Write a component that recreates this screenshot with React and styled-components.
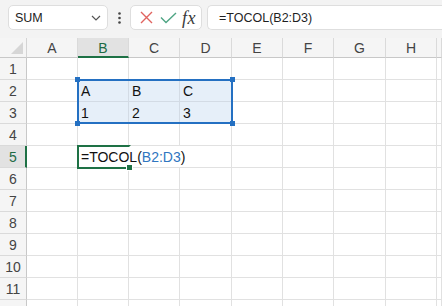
import React from "react";
import styled, { createGlobalStyle } from "styled-components";

const GlobalStyle = createGlobalStyle`
  html, body { margin: 0; padding: 0; background: #ffffff; }
  body { font-family: "Liberation Sans", Arial, sans-serif; overflow: hidden; }
  #root { width: 442px; height: 306px; overflow: hidden; }
`;

const Toolbar = styled.div`
  height: 38px;
  background: #f3f3f3;
  display: flex;
  align-items: flex-start;
  padding: 5px 0 0 8px;
  box-sizing: border-box;
  gap: 0;
`;

const Box = styled.div`
  height: 25px;
  box-sizing: border-box;
  background: #ffffff;
  border: 1px solid #dedede;
  border-radius: 5px;
  display: flex;
  align-items: center;
`;

const NameBox = styled(Box)`
  width: 100px;
  padding: 0 6px 0 6px;
  justify-content: space-between;
  font-family: "Liberation Sans", Arial, sans-serif;
  font-size: 12.5px;
  color: #222222;
`;

const Dots = styled.div`
  width: 22px;
  height: 25px;
  display: flex;
  align-items: center;
  justify-content: center;
`;

const FxGroup = styled(Box)`
  width: 72px;
  padding: 0 0 0 4px;
  gap: 0;
`;

const IconSlot = styled.div`
  width: ${(p) => p.$w}px;
  height: 23px;
  display: flex;
  align-items: center;
  justify-content: center;
`;

const FxText = styled.span`
  font-family: "Liberation Serif", "Times New Roman", serif;
  font-style: italic;
  font-size: 18px;
  color: #3a3a3a;
  line-height: 1;
  letter-spacing: 0.5px;
`;

const FormulaBox = styled(Box)`
  margin-left: 5px;
  flex: 1;
  border-right: none;
  border-top-right-radius: 0;
  border-bottom-right-radius: 0;
  padding-left: 11px;
  font-family: "Liberation Sans", Arial, sans-serif;
  font-size: 12.5px;
  color: #1f1f1f;
`;

const Sheet = styled.div`
  position: relative;
  display: grid;
  grid-template-columns: 27px 51px 51px 51px 52px 51px 51px 52px 51px 1fr;
  grid-template-rows: 20px;
  grid-auto-rows: 22px;
  font-family: "Liberation Sans", Arial, sans-serif;
`;

const Corner = styled.div`
  background: #f5f5f5;
  box-sizing: border-box;
  border-right: 1px solid #d4d4d4;
  border-bottom: 1px solid #c8c8c8;
  display: flex;
  align-items: flex-end;
  justify-content: flex-end;
  padding: 0 3px 3px 0;
`;

const ColHeader = styled.div`
  background: ${(p) => (p.$active ? "#e2e2e2" : "#f5f5f5")};
  box-sizing: border-box;
  border-right: 1px solid #dadada;
  border-bottom: ${(p) => (p.$active ? "2px solid #1e7145" : "1px solid #c8c8c8")};
  display: flex;
  align-items: center;
  justify-content: center;
  font-size: 14px;
  color: ${(p) => (p.$active ? "#1e6b44" : "#444444")};
  padding-top: ${(p) => (p.$active ? "1px" : "0")};
`;

const RowHeader = styled.div`
  background: ${(p) => (p.$active ? "#e2e2e2" : "#f5f5f5")};
  box-sizing: border-box;
  border-right: ${(p) => (p.$active ? "2px solid #1e7145" : "1px solid #c8c8c8")};
  border-bottom: 1px solid #dadada;
  display: flex;
  align-items: center;
  justify-content: center;
  font-size: 14px;
  color: ${(p) => (p.$active ? "#1e6b44" : "#444444")};
  padding-left: ${(p) => (p.$active ? "1px" : "0")};
`;

const Cell = styled.div`
  background: ${(p) => (p.$sel ? "#e6eff9" : "#ffffff")};
  box-sizing: border-box;
  border-right: 1px solid ${(p) => (p.$sel ? "#d3dbe5" : "#e1e1e1")};
  border-bottom: 1px solid ${(p) => (p.$sel ? "#d3dbe5" : "#e1e1e1")};
  grid-column: ${(p) => (p.$span ? `span ${p.$span}` : "auto")};
  font-size: 14px;
  line-height: 19px;
  padding: 2px 0 0 3px;
  color: #111111;
  white-space: nowrap;
  overflow: visible;
`;

const Ref = styled.span`
  color: #2f76c0;
`;

const RangeFrame = styled.div`
  position: absolute;
  left: 77px;
  top: 41px;
  width: 156px;
  height: 45px;
  box-sizing: border-box;
  border: 2px solid #2470c2;
  pointer-events: none;
`;

const Handle = styled.div`
  position: absolute;
  width: 5px;
  height: 5px;
  background: #2470c2;
  ${(p) => (p.$x === "l" ? "left: -4px;" : "right: -4px;")}
  ${(p) => (p.$y === "t" ? "top: -4px;" : "bottom: -4px;")}
`;

const ActiveFrame = styled.div`
  position: absolute;
  left: 77px;
  top: 107px;
  width: 54px;
  height: 24px;
  box-sizing: border-box;
  border: 2px solid #1e7145;
  border-right-color: transparent;
  pointer-events: none;
`;

const FillHandle = styled.div`
  position: absolute;
  right: -4px;
  bottom: -4px;
  width: 5px;
  height: 5px;
  background: #1e7145;
  border: 1px solid #ffffff;
`;

const cols = ["A", "B", "C", "D", "E", "F", "G", "H", ""];

const data = {
  2: { 1: "A", 2: "B", 3: "C" },
  3: { 1: "1", 2: "2", 3: "3" },
};

function Row({ n, label }) {
  const cells = [];
  if (n === 5) {
    cells.push(<Cell key="a" />);
    cells.push(
      <Cell key="b" $span={3}>
        =TOCOL(<Ref>B2:D3</Ref>)
      </Cell>
    );
    for (let i = 4; i < 9; i++) cells.push(<Cell key={i} />);
  } else {
    for (let i = 0; i < 9; i++) {
      const sel = (n === 2 || n === 3) && i >= 1 && i <= 3;
      cells.push(
        <Cell key={i} $sel={sel}>
          {data[n] && data[n][i]}
        </Cell>
      );
    }
  }
  return (
    <>
      <RowHeader $active={n === 5}>{label}</RowHeader>
      {cells}
    </>
  );
}

export default function App() {
  const rows = Array.from({ length: 12 }, (_, i) => i + 1);
  return (
    <>
      <GlobalStyle />
      <Toolbar>
        <NameBox>
          <span>SUM</span>
          <svg width="10" height="6" viewBox="0 0 10 6">
            <path d="M1 1 L5 5 L9 1" fill="none" stroke="#555" strokeWidth="1.2" />
          </svg>
        </NameBox>
        <Dots>
          <svg width="3" height="12" viewBox="0 0 3 12">
            <circle cx="1.5" cy="1.5" r="1.3" fill="#444" />
            <circle cx="1.5" cy="6" r="1.3" fill="#444" />
            <circle cx="1.5" cy="10.5" r="1.3" fill="#444" />
          </svg>
        </Dots>
        <FxGroup>
          <IconSlot $w={22}>
            <svg width="13" height="13" viewBox="0 0 13 13">
              <path d="M1 1 L12 12 M12 1 L1 12" stroke="#e0635f" strokeWidth="1.4" fill="none" />
            </svg>
          </IconSlot>
          <IconSlot $w={22}>
            <svg width="17" height="12" viewBox="0 0 17 12">
              <path d="M1 5.5 L6 10.5 L16 1" stroke="#4fa584" strokeWidth="1.4" fill="none" />
            </svg>
          </IconSlot>
          <IconSlot $w={20}>
            <FxText>fx</FxText>
          </IconSlot>
        </FxGroup>
        <FormulaBox>=TOCOL(B2:D3)</FormulaBox>
      </Toolbar>
      <Sheet>
        <Corner>
          <svg width="12" height="12" viewBox="0 0 12 12">
            <path d="M12 0 L12 12 L0 12 Z" fill="#d6d6d6" />
          </svg>
        </Corner>
        {cols.map((c, i) => (
          <ColHeader key={i} $active={c === "B"}>
            {c}
          </ColHeader>
        ))}
        {rows.map((n) => (
          <Row key={n} n={n} label={n <= 11 ? n : ""} />
        ))}
        <RangeFrame>
          <Handle $x="l" $y="t" />
          <Handle $x="r" $y="t" />
          <Handle $x="l" $y="b" />
          <Handle $x="r" $y="b" />
        </RangeFrame>
        <ActiveFrame>
          <FillHandle />
        </ActiveFrame>
      </Sheet>
    </>
  );
}
